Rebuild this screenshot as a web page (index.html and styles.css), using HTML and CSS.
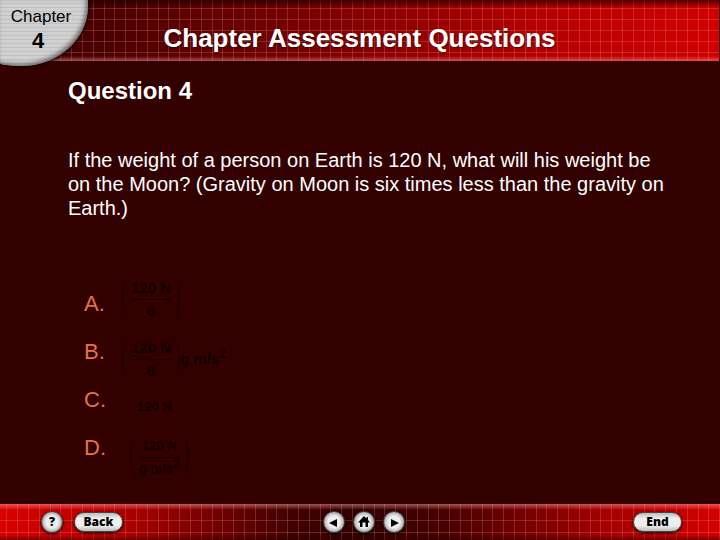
FILE: index.html
```html
<!DOCTYPE html>
<html lang="en">
<head>
    <meta charset="UTF-8">
    <meta name="viewport" content="width=device-width, initial-scale=1.0">
    <title>Chapter Assessment Questions</title>
    <link rel="stylesheet" href="styles.css">
</head>
<body>
    <header class="banner">
        <div class="chapter">
            <span>Chapter</span>
            <span class="chapter-number">4</span>
        </div>
        <h1>Chapter Assessment Questions</h1>
    </header>

    <main class="content">
        <h2>Question 4</h2>
        <p class="question">If the weight of a person on Earth is 120 N, what will his weight be on the Moon? (Gravity on Moon is six times less than the gravity on Earth.)</p>

        <!-- Answers -->
        <ul class="answers">
            <li>
                <span class="letter">A.</span>
                <span class="formula">
                    <span class="bracket"></span>
                    <span class="fraction"><span>120 N</span><span class="bottom">6</span></span>
                    <span class="bracket right"></span>
                </span>
            </li>
            <li>
                <span class="letter">B.</span>
                <span class="formula strong">
                    <span class="bracket"></span>
                    <span class="fraction"><span>120 N</span><span class="bottom">6</span></span>
                    <span class="bracket right"></span>
                    <span>g m/s<sup>2</sup></span>
                </span>
            </li>
            <li>
                <span class="letter">C.</span>
                <span class="formula plain">120 N</span>
            </li>
            <li>
                <span class="letter">D.</span>
                <span class="formula small">
                    <span class="bracket"></span>
                    <span class="fraction"><span>120 N</span><span class="bottom">g m/s<sup>2</sup></span></span>
                    <span class="bracket right"></span>
                </span>
            </li>
        </ul>
    </main>

    <!-- Navigation -->
    <footer class="toolbar">
        <div class="group">
            <button class="round">?</button>
            <button class="pill">Back</button>
        </div>
        <div class="group arrows">
            <button class="round" aria-label="Previous">
                <svg width="20" height="20" viewBox="0 0 20 20"><path d="M5 11L13 7V15Z"/></svg>
            </button>
            <button class="round" aria-label="Home">
                <svg width="20" height="20" viewBox="0 0 20 20"><path d="M10 4L12.500 6.500V5H14V8L16 10.500H14V15H11.500V10.500H8.500V15H6V10.500H4Z"/></svg>
            </button>
            <button class="round" aria-label="Next">
                <svg width="20" height="20" viewBox="0 0 20 20"><path d="M15 11L7 7V15Z"/></svg>
            </button>
        </div>
        <div class="group end">
            <button class="pill">End</button>
        </div>
    </footer>
</body>
</html>
```
FILE: styles.css
```css
* {
    box-sizing: border-box;
}
body {
    --line: rgba(255, 170, 170, 0.22);
    --columns: linear-gradient(90deg,
        transparent 6px, var(--line) 6px 7px,
        transparent 7px 17px, var(--line) 17px 18px,
        transparent 18px 28px, var(--line) 28px 29px,
        transparent 29px 39px, var(--line) 39px 40px,
        transparent 40px 50px, var(--line) 50px 51px,
        transparent 51px);
    margin: 0;
    min-height: 100vh;
    display: flex;
    flex-direction: column;
    background-color: #330000;
    color: white;
    font-family: "Liberation Sans", Arial, sans-serif;
}
.banner {
    position: relative;
    height: 61px;
    display: flex;
    align-items: center;
    justify-content: center;
    padding-top: 15px;
    border-right: 1px solid #330000;
    background:
        linear-gradient(rgba(30, 0, 0, 0.7), transparent 8px),
        linear-gradient(0deg, rgba(255, 160, 160, 0.5), transparent 5px),
        repeating-linear-gradient(transparent 0 8px, var(--line) 8px 9px, transparent 9px 11px),
        var(--columns) 0 0 / 54px 100%,
        linear-gradient(90deg, #3a0000, #4c0000 15%, #7c0000 45%, #b40000 75%, #d00000);
}
h1 {
    margin: 0;
    font-size: 26px;
    line-height: 30px;
    text-shadow: 1px 1px 2px rgba(0, 0, 0, 0.6);
}
.chapter {
    position: absolute;
    top: 0;
    left: 0;
    width: 88px;
    height: 66px;
    padding: 7px 6px 0 0;
    display: flex;
    flex-direction: column;
    align-items: center;
    border-radius: 0 0 67px 21px / 0 0 60px 3px;
    background: repeating-linear-gradient(#d0d0d0 0 3px, #c0c0c0 3px 4px);
    box-shadow: 1px 1px 3px #1a0000, inset -2px -2px 4px rgba(40, 40, 40, 0.6);
    color: black;
    font-size: 17px;
    line-height: 20px;
}
.chapter-number {
    padding-right: 6px;
    font-size: 22px;
    font-weight: bold;
    line-height: 28px;
}
.content {
    flex: 1;
    padding: 16px 48px 0 68px;
}
h2 {
    margin: 0;
    font-size: 24px;
    line-height: 28px;
}
.question {
    margin: 43px 0 0;
    font-size: 20px;
    line-height: 24px;
}
.answers {
    list-style: none;
    margin: 55px 0 0;
    padding: 0 0 0 16px;
}
.answers li {
    height: 48px;
    display: flex;
    align-items: center;
}
.letter {
    width: 38px;
    padding-top: 10px;
    color: #e4714a;
    font-size: 22px;
    line-height: 24px;
}
.formula {
    display: flex;
    align-items: center;
    color: #120000;
    font-size: 15px;
    font-weight: bold;
    line-height: 22px;
}
.strong {
    padding-top: 24px;
}
.plain {
    padding: 24px 0 0 15px;
    font-size: 13px;
}
.small {
    padding: 28px 0 0 8px;
    font-size: 13px;
}
.bracket {
    width: 6px;
    height: 40px;
    border-left: 2px solid #210000;
    border-radius: 6px 0 0 6px / 20px 0 0 20px;
}
.bracket.right {
    transform: scaleX(-1);
}
.fraction {
    padding: 0 3px;
    text-align: center;
}
.fraction span {
    display: block;
}
.fraction .bottom {
    border-top: 1px solid #120000;
}
sup {
    font-size: 12px;
    line-height: 0;
}
.toolbar {
    height: 36px;
    display: grid;
    grid-template-columns: 1fr auto 1fr;
    align-items: center;
    padding: 0 38px 0 41px;
    background:
        linear-gradient(rgba(255, 170, 170, 0.5), transparent 6px),
        linear-gradient(0deg, rgba(40, 0, 0, 0.5), transparent 5px),
        linear-gradient(transparent 16px, var(--line) 16px 17px, transparent 17px 28px, var(--line) 28px 29px, transparent 29px),
        var(--columns) 0 0 / 54px 100%,
        linear-gradient(90deg, #d80000, #b80000 15%, #420000 40%, #300000 50%, #480000 62%, #a80000 85%, #d40000);
}
.group {
    display: flex;
    align-items: center;
    gap: 11px;
}
.arrows {
    gap: 8px;
    padding-left: 4px;
}
.end {
    justify-content: flex-end;
}
button {
    height: 22px;
    padding: 0;
    display: flex;
    align-items: center;
    justify-content: center;
    border: 1px solid #444;
    border-radius: 11px;
    background: radial-gradient(closest-side, #eee 60%, #aaa);
    box-shadow: 0 1px 3px black;
    color: black;
    font-family: "Open Sans", Tahoma, sans-serif;
    font-size: 12px;
    font-weight: 800;
    line-height: 16px;
    cursor: pointer;
}
.round {
    width: 22px;
}
.pill {
    width: 49px;
    height: 20px;
    background: linear-gradient(#bbb, #eee 30% 70%, #bbb);
}
```
